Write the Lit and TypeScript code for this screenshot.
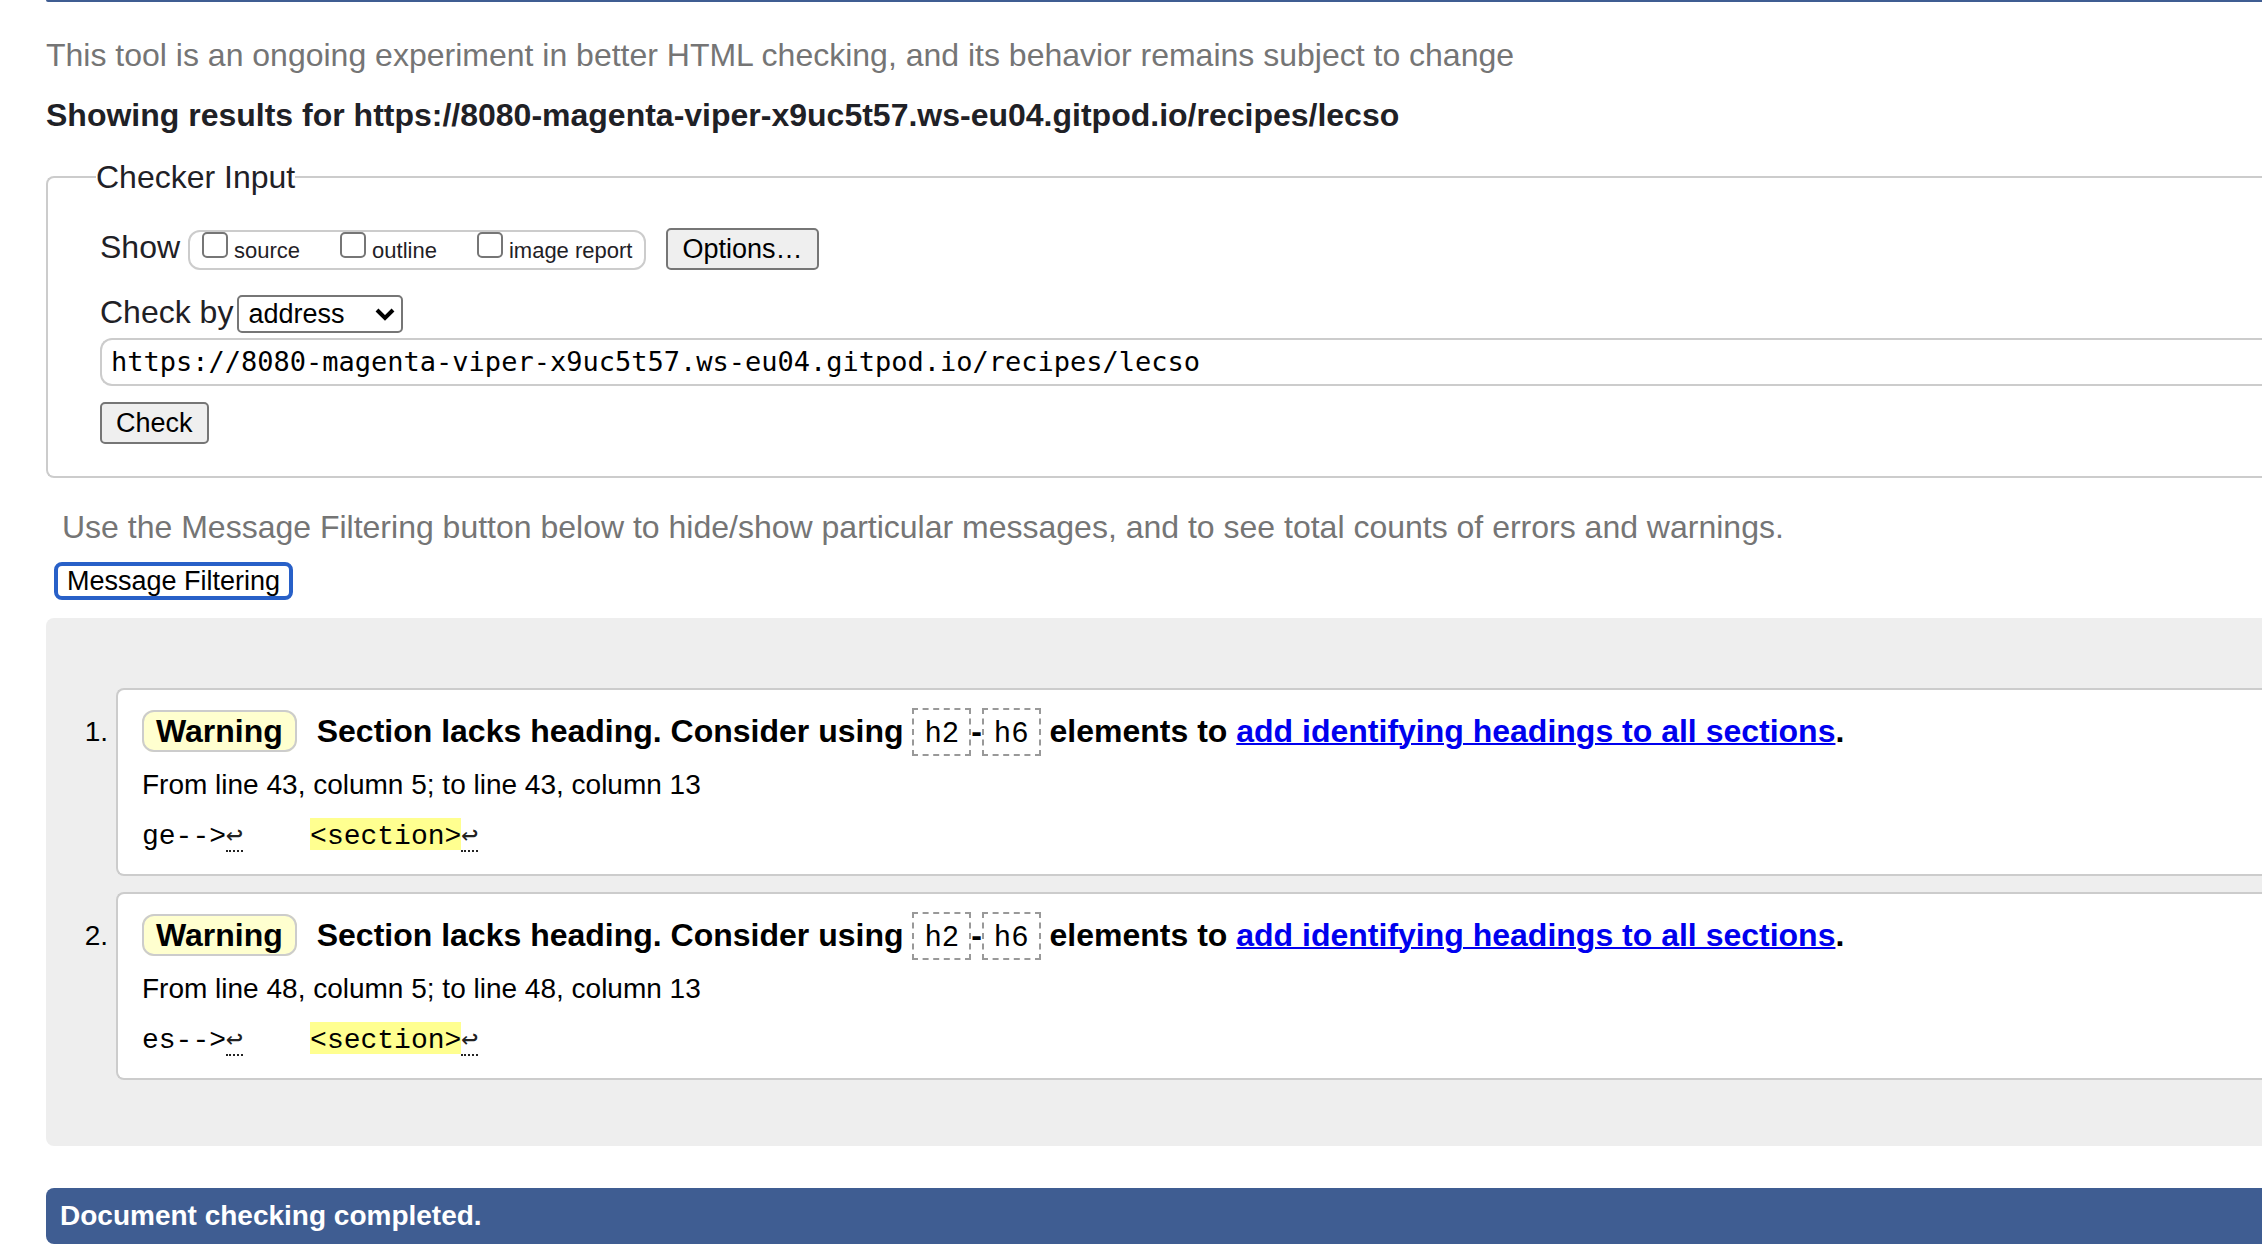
import { LitElement, html, css } from "lit";
import { customElement, property } from "lit/decorators.js";

interface Message {
  line: number;
  before: string;
}

const CHECKED_URL = "https://8080-magenta-viper-x9uc5t57.ws-eu04.gitpod.io/recipes/lecso";

const MESSAGES: Message[] = [
  { line: 43, before: "ge-->" },
  { line: 48, before: "es-->" },
];

@customElement("checker-message")
class CheckerMessage extends LitElement {
  @property({ type: Number }) index = 1;
  @property({ attribute: false }) message: Message = MESSAGES[0];

  static styles = css`
    :host {
      display: grid;
      grid-template-columns: 62px 1fr;
      column-gap: 8px;
      color: #000;
      font-size: 28px;
      line-height: 32px;
    }
    .number {
      padding-top: 26px;
      line-height: 36px;
      text-align: right;
    }
    .card {
      padding: 23px 24px 21px;
      border: 2px solid #ccc;
      border-right: 0;
      border-radius: 8px 0 0 8px;
      background: #fff;
    }
    p {
      margin: 0;
    }
    .summary {
      font-size: 32px;
      line-height: 36px;
      font-weight: bold;
    }
    .badge {
      margin-right: 11px;
      padding: 1px 12px;
      border: 2px solid #ccc;
      border-radius: 12px;
      background: #ffffcf;
    }
    .tag {
      padding: 8px 10px 3px;
      border: 2px dashed #999;
      font: 29px "Liberation Mono", monospace;
    }
    .link {
      color: #0000ee;
      text-decoration-thickness: 2px;
    }
    .location {
      margin-top: 18px;
    }
    .extract {
      margin-top: 17px;
      white-space: pre;
      font-family: "Liberation Mono", "DejaVu Sans Mono", monospace;
    }
    .extract code {
      font: inherit;
    }
    .mark,
    .newline {
      display: inline-block;
      padding-top: 6px;
      line-height: 26px;
    }
    .mark {
      background: #ffff90;
    }
    .newline {
      border-bottom: 2px dotted #222;
      color: #222;
    }
  `;

  render() {
    const { line, before } = this.message;
    const newline = html`<span class="newline" title="Line break">↩</span>`;
    return html`
      <span class="number">${this.index}.</span>
      <div class="card">
        <p class="summary"><span class="badge">Warning</span> Section lacks heading. Consider using <code class="tag">h2</code>-<code class="tag">h6</code> elements to <a class="link" href="#headings">add identifying headings to all sections</a>.</p>
        <p class="location">From line ${line}, column 5; to line ${line}, column 13</p>
        <p class="extract"><code>${before}</code>${newline}    <span class="mark">&lt;section></span>${newline}</p>
      </div>
    `;
  }
}

@customElement("app-root")
class AppRoot extends LitElement {
  static styles = css`
    :host {
      display: block;
      box-sizing: border-box;
      min-height: 100vh;
      padding-left: 46px;
      overflow: hidden;
      background: #fff;
      color: #1f2126;
      font-family: "Liberation Sans", Arial, Helvetica, sans-serif;
      font-size: 32px;
      line-height: 36px;
    }
    * {
      box-sizing: border-box;
    }
    .banner {
      height: 2px;
      border-bottom-left-radius: 8px;
      background: #3f5d92;
    }
    .tagline,
    .hint {
      margin: 35px 0 0;
      color: #757575;
    }
    .title {
      margin: 24px 0 26px;
      font-size: 32px;
      font-weight: bold;
    }
    .checker {
      min-width: 0;
      margin: 0;
      padding: 0 0 32px 52px;
      border: 2px solid #ccc;
      border-right: 0;
      border-radius: 8px 0 0 8px;
    }
    .legend {
      margin-left: -4px;
      padding: 0;
    }
    .row {
      display: flex;
      align-items: baseline;
    }
    .show {
      margin-top: 33px;
    }
    .choices {
      display: flex;
      gap: 40px;
      margin: 0 20px 0 8px;
      padding: 0 12px 4px;
      border: 2px solid #ccc;
      border-radius: 12px;
    }
    .choice {
      display: flex;
      align-items: baseline;
      gap: 6px;
      font-size: 22px;
      line-height: 26px;
    }
    .box {
      appearance: none;
      width: 26px;
      height: 26px;
      margin: 0;
      border: 2px solid #767676;
      border-radius: 5px;
      background: #fff;
    }
    .box:checked {
      background: #2860c8;
    }
    .button,
    .select {
      margin: 0;
      border: 2px solid #767676;
      border-radius: 5px;
      color: #000;
      font-family: inherit;
      font-size: 27px;
      line-height: 30px;
    }
    .button {
      padding: 4px 14px;
      background: #efefef;
    }
    .by {
      gap: 4px;
      margin-top: 24px;
    }
    .picker {
      display: grid;
      align-items: center;
    }
    .picker > * {
      grid-area: 1 / 1;
    }
    .select {
      appearance: none;
      width: 166px;
      padding: 2px 9px;
      background: #fff;
    }
    .chevron {
      justify-self: end;
      width: 20px;
      height: 14px;
      margin-right: 8px;
      pointer-events: none;
    }
    .address {
      display: block;
      width: 100%;
      margin: 5px 0 16px;
      padding: 6px 9px;
      border: 2px solid #ccc;
      border-right: 0;
      border-radius: 12px 0 0 12px;
      background: #fff;
      color: #000;
      font-family: "DejaVu Sans Mono", monospace;
      font-size: 27px;
      line-height: 32px;
    }
    .check {
      display: block;
    }
    .hint {
      margin: 31px 0 17px 16px;
    }
    .filter {
      display: block;
      margin: 0 0 18px 8px;
      padding: 0 9px;
      border: 4px solid #2860c8;
      border-radius: 8px;
      background: #fff;
    }
    .results {
      display: grid;
      gap: 16px;
      margin: 0 0 42px;
      padding: 70px 0 66px;
      border-radius: 8px 0 0 8px;
      background: #eee;
      list-style: none;
    }
    .done {
      margin: 0 0 4px;
      padding: 12px 14px;
      border-radius: 8px 0 0 8px;
      background: #3f5d92;
      color: #fff;
      font-size: 28px;
      line-height: 32px;
      font-weight: bold;
    }
  `;

  render() {
    return html`
      <div class="banner"></div>
      <p class="tagline">This tool is an ongoing experiment in better HTML checking, and its behavior remains subject to change</p>
      <h2 class="title">Showing results for ${CHECKED_URL}</h2>
      <fieldset class="checker">
        <legend class="legend">Checker Input</legend>
        <div class="row show">
          <span>Show</span>
          <div class="choices">
            ${["source", "outline", "image report"].map(
              (name) => html`<label class="choice"><input class="box" type="checkbox" />${name}</label>`
            )}
          </div>
          <button class="button" type="button">Options…</button>
        </div>
        <div class="row by">
          <label for="method">Check by</label>
          <span class="picker">
            <select class="select" id="method">
              <option>address</option>
              <option>file upload</option>
              <option>text input</option>
            </select>
            <svg class="chevron" viewBox="0 0 20 14" aria-hidden="true">
              <path d="M2 3 L10 11 L18 3" fill="none" stroke="#000" stroke-width="4" />
            </svg>
          </span>
        </div>
        <input class="address" type="text" aria-label="Address" .value=${CHECKED_URL} />
        <button class="button check" type="submit">Check</button>
      </fieldset>
      <p class="hint">Use the Message Filtering button below to hide/show particular messages, and to see total counts of errors and warnings.</p>
      <button class="button filter" type="button">Message Filtering</button>
      <ol class="results">
        ${MESSAGES.map(
          (message, i) => html`<li><checker-message .index=${i + 1} .message=${message}></checker-message></li>`
        )}
      </ol>
      <p class="done">Document checking completed.</p>
    `;
  }
}
